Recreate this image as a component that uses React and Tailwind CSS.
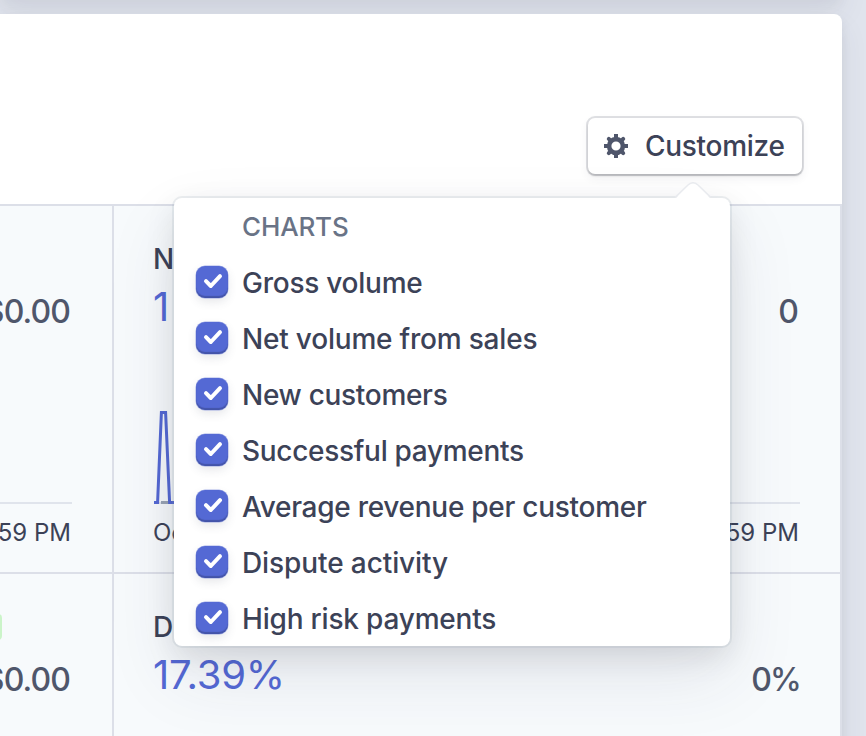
const charts = [
  { label: 'Gross volume', tracking: 'tracking-[-0.25px]' },
  { label: 'Net volume from sales', tracking: 'tracking-[-0.2px]' },
  { label: 'New customers', tracking: 'tracking-[-0.3px]' },
  { label: 'Successful payments', tracking: 'tracking-[-0.3px]' },
  { label: 'Average revenue per customer', tracking: 'tracking-[-0.27px]' },
  { label: 'Dispute activity', tracking: 'tracking-[-0.1px]' },
  { label: 'High risk payments', tracking: 'tracking-[-0.19px]' },
];

function Gear() {
  return (
    <svg viewBox="0 0 24 24" className="size-6 shrink-0" fill="none" stroke="#4f566b">
      <circle cx="12" cy="12" r="6.9" strokeWidth="4.6" />
      <g strokeWidth="4">
        <path d="M12 0v4M12 20v4M0 12h4M20 12h4" />
        <path strokeLinecap="round" d="M4.8 4.8l2 2M19.2 4.8l-2 2M4.8 19.2l2-2M19.2 19.2l-2-2" />
      </g>
    </svg>
  );
}

function Checkbox() {
  return (
    <span className="flex size-8 shrink-0 rounded-[9px] bg-[#5469d4] shadow-[inset_0_-2px_1px_rgba(0,0,0,0.2),0_0_0_0.5px_rgba(84,105,212,0.5),0_4px_10px_rgba(60,66,87,0.12)]">
      <svg viewBox="0 0 32 32" className="size-8" fill="none" stroke="#fff" strokeWidth="4" strokeLinecap="round" strokeLinejoin="round">
        <path d="M10 15.2l4.8 4.8 9.2-9.8" />
      </svg>
    </span>
  );
}

function Cell({ title, value, compare, compareStyle = 'mr-px', start, end, spike, className }) {
  return (
    <div className={`flex shrink-0 flex-col bg-[#f7fafc] pt-[33px] pr-10 ${className}`}>
      <div className="-ml-px flex h-10 items-center">{title}</div>
      <div className="-ml-px flex h-[56px] items-center justify-between">
        <span className="text-[40px] leading-[56px] tracking-[-0.2px] text-[#5469d4]">{value}</span>
        <span className={`pt-[10px] text-[32px] font-medium text-[#4f566b] ${compareStyle}`}>{compare}</span>
      </div>
      <div className="mt-[75px] flex h-[94px] shrink-0 items-end border-b-2 border-[#e0e4ec]">
        {spike && (
          <svg viewBox="0 0 40 94" className="-mb-[2px] h-[94px] w-10" fill="none" stroke="#5469d4" strokeWidth="3">
            <path d="M7 92.5h10" stroke="#9aa5b5" />
            <path d="M0 92.5H3.6L7.4 2.5H11.6L15.6 92.5H40" />
          </svg>
        )}
      </div>
      <div className="mt-[13px] mr-px -ml-px flex h-8 items-center justify-between whitespace-nowrap text-2xl leading-8 text-[#3c4257]">
        <span>{start}</span>
        <span>{end}</span>
      </div>
    </div>
  );
}

const title = (text) => <span className="text-[28px] font-medium text-[#3c4257]">{text}</span>;

export default function App() {
  return (
    <div className="h-[736px] w-[866px] overflow-hidden bg-[#e0e4ed] font-['Inter',sans-serif] text-[#3c4257]">
      <div className="-mt-10 h-10 w-[842px] rounded-br-lg bg-white shadow-[0_14px_28px_rgba(60,66,87,0.08),0_6px_12px_rgba(0,0,0,0.03)]" />
      <main className="relative mt-[14px] flex h-[800px] w-[842px] flex-col rounded-tr-lg bg-white shadow-[0_14px_28px_rgba(60,66,87,0.08),0_6px_12px_rgba(0,0,0,0.06)]">
        <header className="flex h-[190px] shrink-0 justify-end pt-[104px] pr-10">
          <button className="flex h-14 w-[214px] items-center gap-[17px] rounded-[7px] bg-white pl-4 text-[28px] font-medium shadow-[0_0_0_2px_rgba(60,66,87,0.16),0_2px_2px_rgba(0,0,0,0.16),0_4px_10px_rgba(60,66,87,0.08)]">
            <Gear />
            <span className="tracking-[-0.28px]">Customize</span>
          </button>
        </header>
        <section className="flex flex-col gap-[2px] border-t-2 border-r-2 border-[#dcdfe8] bg-[#dcdfe8]">
          <div className="flex justify-end gap-[2px] overflow-hidden">
            <Cell className="h-[366px] w-[400px]" compare="$0.00" compareStyle="mr-[2px] tracking-[-0.9px]" end="11:59 PM" />
            <Cell className="h-[366px] w-[726px] pl-10" title={title('New customers')} value="1" compare="0" start="Oct 1" end="11:59 PM" spike />
          </div>
          <div className="flex justify-end gap-[2px] overflow-hidden">
            <Cell
              className="h-[366px] w-[400px]"
              title={<span className="ml-[231px] h-[26px] w-[60px] rounded-r bg-[#cbf4c9]" />}
              compare="$0.00"
              compareStyle="mr-[2px] tracking-[-0.9px]"
            />
            <Cell className="h-[366px] w-[726px] pl-10" title={title('Dispute activity')} value="17.39%" compare="0%" compareStyle="tracking-[-1.8px]" />
          </div>
        </section>

        <div className="absolute top-[184px] left-[174px] h-[448px] w-[556px] rounded-lg bg-white pt-[10px] shadow-[0_0_0_2px_rgba(136,152,170,0.15),0_30px_70px_rgba(49,49,93,0.1),0_10px_30px_rgba(0,0,0,0.1)]">
          <svg viewBox="0 0 40 20" className="absolute -top-4 left-[499px] h-5 w-10" fill="#fff">
            <path d="M2 17L15 3.5Q20 -1 25 3.5L38 17V20H2Z" />
            <path d="M2 15.5L15 3Q20 -1.5 25 3L38 15.5" fill="none" stroke="#e9ebef" strokeWidth="1.5" />
          </svg>
          <div className="flex h-[37px] items-center pl-[68px] text-[26px] font-medium tracking-[-0.15px] text-[#697386]">CHARTS</div>
          <ul className="mt-[9px] flex flex-col">
            {charts.map((c) => (
              <li key={c.label} className="flex h-14 items-center gap-[14px] pl-[22px]">
                <Checkbox />
                <span className={`pt-px text-[28px] font-medium whitespace-nowrap ${c.tracking}`}>{c.label}</span>
              </li>
            ))}
          </ul>
        </div>
      </main>
    </div>
  );
}
